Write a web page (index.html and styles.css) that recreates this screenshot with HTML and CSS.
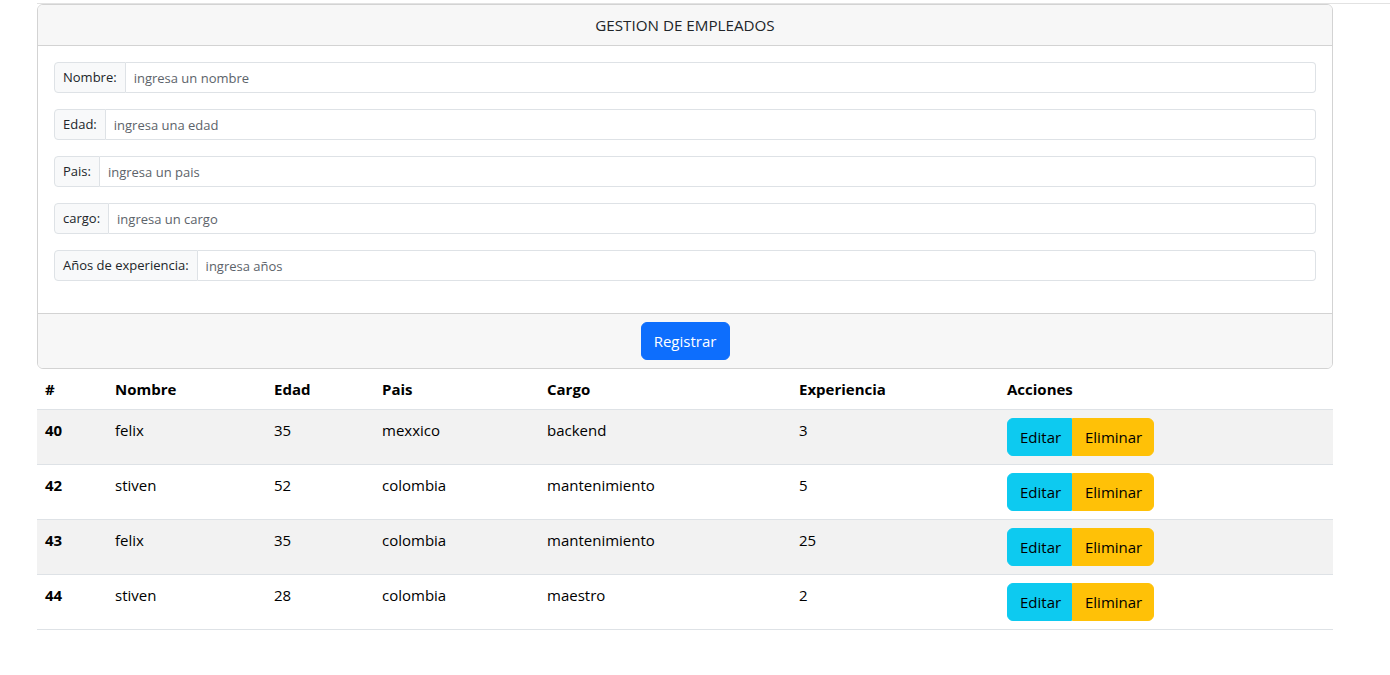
FILE: index.html
```html
<!DOCTYPE html>
<html lang="es">
<head>
<meta charset="utf-8">
<title>Gestion de empleados</title>
<link rel="stylesheet" href="styles.css">
</head>
<body>
<div class="topline"></div>
<main class="container">
  <section class="card">
    <header class="card-header">GESTION DE EMPLEADOS</header>
    <div class="card-body">
      <div class="input-group"><span class="input-group-text">Nombre:</span><input class="form-control" type="text" placeholder="ingresa un nombre"></div>
      <div class="input-group"><span class="input-group-text">Edad:</span><input class="form-control" type="text" placeholder="ingresa una edad"></div>
      <div class="input-group"><span class="input-group-text">Pais:</span><input class="form-control" type="text" placeholder="ingresa un pais"></div>
      <div class="input-group"><span class="input-group-text">cargo:</span><input class="form-control" type="text" placeholder="ingresa un cargo"></div>
      <div class="input-group"><span class="input-group-text">Años de experiencia:</span><input class="form-control" type="text" placeholder="ingresa años"></div>
    </div>
    <footer class="card-footer"><button class="btn btn-primary" type="button">Registrar</button></footer>
  </section>
  <table class="table">
    <colgroup>
      <col class="c1"><col class="c2"><col class="c3"><col class="c4"><col class="c5"><col class="c6"><col class="c7">
    </colgroup>
    <thead>
      <tr><th>#</th><th>Nombre</th><th>Edad</th><th>Pais</th><th>Cargo</th><th>Experiencia</th><th>Acciones</th></tr>
    </thead>
    <tbody>
      <tr class="striped"><th>40</th><td>felix</td><td>35</td><td>mexxico</td><td>backend</td><td>3</td><td><div class="btn-group"><button class="btn btn-info" type="button">Editar</button><button class="btn btn-warning" type="button">Eliminar</button></div></td></tr>
      <tr><th>42</th><td>stiven</td><td>52</td><td>colombia</td><td>mantenimiento</td><td>5</td><td><div class="btn-group"><button class="btn btn-info" type="button">Editar</button><button class="btn btn-warning" type="button">Eliminar</button></div></td></tr>
      <tr class="striped"><th>43</th><td>felix</td><td>35</td><td>colombia</td><td>mantenimiento</td><td>25</td><td><div class="btn-group"><button class="btn btn-info" type="button">Editar</button><button class="btn btn-warning" type="button">Eliminar</button></div></td></tr>
      <tr><th>44</th><td>stiven</td><td>28</td><td>colombia</td><td>maestro</td><td>2</td><td><div class="btn-group"><button class="btn btn-info" type="button">Editar</button><button class="btn btn-warning" type="button">Eliminar</button></div></td></tr>
    </tbody>
  </table>
</main>
</body>
</html>
```

FILE: styles.css
```css
* { box-sizing: border-box; }
html, body { margin: 0; padding: 0; }
body {
  font-family: "Open Sans", "Noto Sans", sans-serif;
  font-size: 16px;
  line-height: 1.5;
  color: #212529;
  background: #fff;
  padding-top: 3px;
}
.topline {
  height: 1px;
  margin-left: 37px;
  background: #e2e2e2;
}
.container {
  width: 1296px;
  margin-left: 37px;
}
.card {
  border: 1px solid #d3d3d3;
  border-radius: 6px;
  background: #fff;
}
.card-header {
  background: #f7f7f7;
  border-bottom: 1px solid #d3d3d3;
  border-radius: 5px 5px 0 0;
  padding: 8px 16px;
  text-align: center;
  font-size: 15.2px;
  line-height: 24px;
  color: #212529;
}
.card-body {
  padding: 16px 16px 0;
}
.input-group {
  display: flex;
  margin-bottom: 16px;
  height: 31px;
}
.card-body .input-group:last-child { margin-bottom: 32px; }
.input-group-text {
  display: flex;
  align-items: center;
  padding: 0 8px;
  font-size: 13px;
  background: #f8f9fa;
  border: 1px solid #dee2e6;
  border-radius: 4px 0 0 4px;
  color: #212529;
  white-space: nowrap;
}
.form-control {
  flex: 1;
  min-width: 0;
  font-family: inherit;
  font-size: 13px;
  padding: 0 8px;
  border: 1px solid #dee2e6;
  border-left: 0;
  border-radius: 0 4px 4px 0;
  color: #212529;
  background: #fff;
  outline: none;
}
.form-control::placeholder { color: #5c636a; }
.card-footer {
  background: #f7f7f7;
  border-top: 1px solid #d3d3d3;
  border-radius: 0 0 5px 5px;
  padding: 8px 16px;
  display: flex;
  justify-content: center;
}
.btn {
  font-family: inherit;
  font-size: 15px;
  line-height: 24px;
  height: 38px;
  padding: 6px 12px;
  border: 1px solid transparent;
  border-radius: 6px;
  cursor: pointer;
}
.btn-primary {
  background: #0d6efd;
  border-color: #0d6efd;
  color: #fff;
  width: 89px;
}
.btn-group { display: flex; }
.btn-info {
  background: #0dcaf0;
  border-color: #0dcaf0;
  color: #000;
  border-radius: 6px 0 0 6px;
  width: 65px;
}
.btn-warning {
  background: #ffc107;
  border-color: #ffc107;
  color: #000;
  border-radius: 0 6px 6px 0;
  width: 82px;
}
.table {
  width: 100%;
  border-collapse: collapse;
  table-layout: fixed;
  font-size: 15px;
  color: #000;
}
.c1 { width: 70px; }
.c2 { width: 159px; }
.c3 { width: 108px; }
.c4 { width: 165px; }
.c5 { width: 252px; }
.c6 { width: 208px; }
.table th, .table td {
  text-align: left;
  vertical-align: top;
  padding: 8px;
  line-height: 24px;
  border-bottom: 1px solid #dee2e6;
}
.table thead th { font-weight: 700; height: 40px; }
.table tbody th { font-weight: 700; }
.table tbody td, .table tbody th { height: 55px; }
.table tbody td { font-weight: 400; }
.table tr.striped > * { background: #f2f2f2; }
```
